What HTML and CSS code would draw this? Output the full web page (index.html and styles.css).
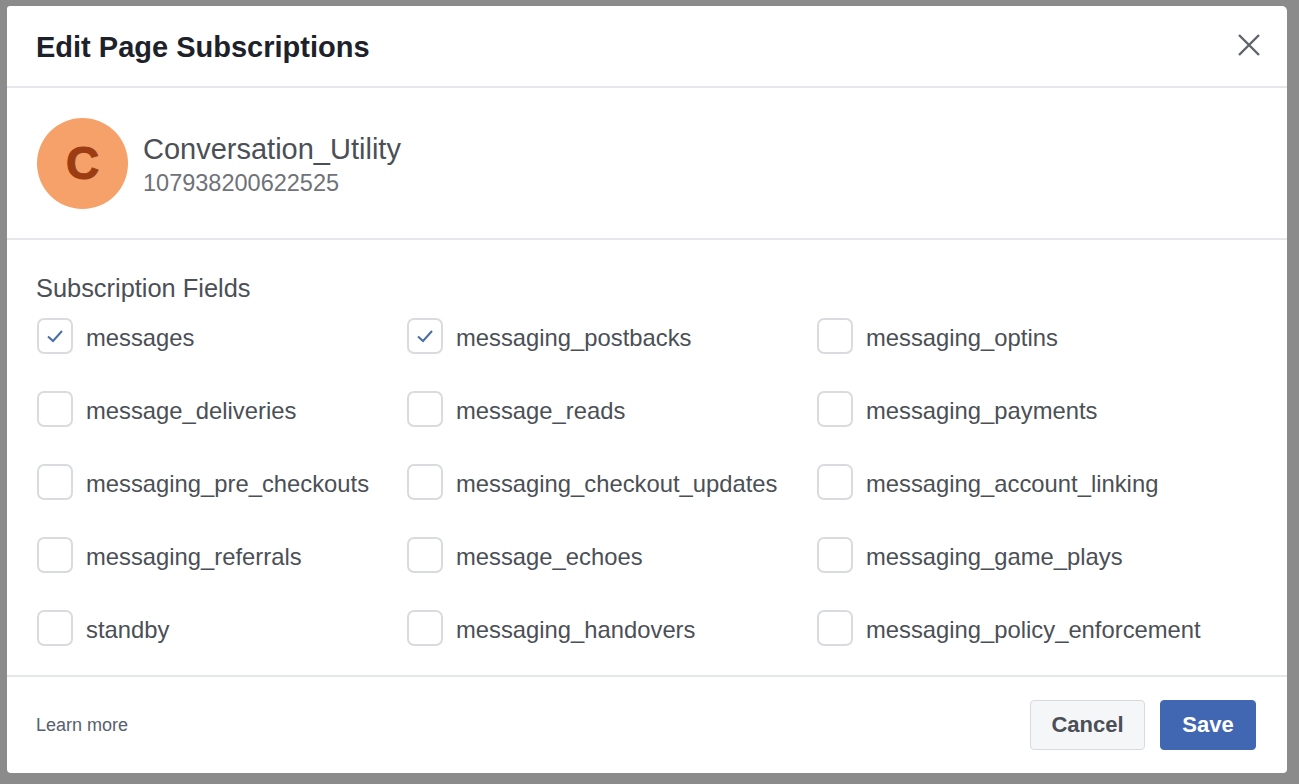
FILE: index.html
```html
<!DOCTYPE html>
<html lang="en">
<head>
<meta charset="utf-8">
<title>Edit Page Subscriptions</title>
<link rel="stylesheet" href="styles.css">
</head>
<body>
<div class="dialog">
  <div class="header">
    <div class="title">Edit Page Subscriptions</div>
    <button class="close" aria-label="Close">
      <svg width="24" height="24" viewBox="0 0 24 24"><path d="M2 2 L22 22 M22 2 L2 22" stroke="#5f636a" stroke-width="2.4" fill="none"/></svg>
    </button>
  </div>
  <div class="page">
    <div class="avatar">C</div>
    <div class="page-info">
      <div class="page-name">Conversation_Utility</div>
      <div class="page-id">107938200622525</div>
    </div>
  </div>
  <div class="fields">
    <div class="fields-title">Subscription Fields</div>
    <div class="grid">
      <label class="item"><span class="box checked"><svg width="20" height="16" viewBox="0 0 20 16"><path d="M3 8.5 L8 13 L17 3" stroke="#4a6ea9" stroke-width="2" fill="none"/></svg></span><span class="label">messages</span></label>
      <label class="item"><span class="box checked"><svg width="20" height="16" viewBox="0 0 20 16"><path d="M3 8.5 L8 13 L17 3" stroke="#4a6ea9" stroke-width="2" fill="none"/></svg></span><span class="label">messaging_postbacks</span></label>
      <label class="item"><span class="box"></span><span class="label">messaging_optins</span></label>
      <label class="item"><span class="box"></span><span class="label">message_deliveries</span></label>
      <label class="item"><span class="box"></span><span class="label">message_reads</span></label>
      <label class="item"><span class="box"></span><span class="label">messaging_payments</span></label>
      <label class="item"><span class="box"></span><span class="label">messaging_pre_checkouts</span></label>
      <label class="item"><span class="box"></span><span class="label">messaging_checkout_updates</span></label>
      <label class="item"><span class="box"></span><span class="label">messaging_account_linking</span></label>
      <label class="item"><span class="box"></span><span class="label">messaging_referrals</span></label>
      <label class="item"><span class="box"></span><span class="label">message_echoes</span></label>
      <label class="item"><span class="box"></span><span class="label">messaging_game_plays</span></label>
      <label class="item"><span class="box"></span><span class="label">standby</span></label>
      <label class="item"><span class="box"></span><span class="label">messaging_handovers</span></label>
      <label class="item"><span class="box"></span><span class="label">messaging_policy_enforcement</span></label>
    </div>
  </div>
  <div class="footer">
    <a class="learn" href="#">Learn more</a>
    <div class="buttons">
      <button class="btn cancel">Cancel</button>
      <button class="btn save">Save</button>
    </div>
  </div>
</div>
</body>
</html>
```
FILE: styles.css
```css
html, body {
  margin: 0;
  padding: 0;
}
body {
  background: #8b8b8b;
  font-family: "Liberation Sans", Arial, sans-serif;
  width: 1299px;
  height: 784px;
  overflow: hidden;
}
.dialog {
  margin: 6px 0 0 7px;
  width: 1280px;
  height: 767px;
  background: #fff;
  border-radius: 3px 5px 4px 4px;
  display: flex;
  flex-direction: column;
  box-sizing: border-box;
}
.header {
  height: 82px;
  box-sizing: border-box;
  border-bottom: 2px solid #e6e7ea;
  display: flex;
  align-items: center;
  justify-content: space-between;
  padding: 0 26px 0 29px;
}
.title {
  font-weight: bold;
  font-size: 29px;
  color: #1d2129;
  padding-top: 2px;
}
.close {
  background: none;
  border: 0;
  padding: 0;
  width: 24px;
  height: 24px;
  display: flex;
  cursor: pointer;
  margin-bottom: 3px;
}
.page {
  height: 152px;
  box-sizing: border-box;
  border-bottom: 2px solid #e6e7ea;
  display: flex;
  align-items: center;
  padding: 0 29px 0 30px;
}
.avatar {
  width: 91px;
  height: 91px;
  border-radius: 50%;
  background: #f5a169;
  color: #9b3c12;
  font-weight: bold;
  font-size: 46px;
  display: flex;
  align-items: center;
  justify-content: center;
  flex-shrink: 0;
  -webkit-text-stroke: 1px #9b3c12;
}
.page-info {
  margin-left: 15px;
  display: flex;
  flex-direction: column;
  padding-top: 4px;
}
.page-name {
  font-size: 29px;
  line-height: 34px;
  color: #4b4f56;
}
.page-id {
  font-size: 23.5px;
  line-height: 30px;
  margin-top: 2px;
  color: #6f7278;
}
.fields {
  box-sizing: border-box;
  height: 437px;
  border-bottom: 2px solid #e6e7ea;
  padding: 33px 29px 0 29px;
}
.fields-title {
  font-size: 25.4px;
  line-height: 30px;
  color: #4b4f56;
}
.grid {
  margin-top: 15px;
  display: grid;
  grid-template-columns: 370px 410px auto;
  row-gap: 37px;
}
.item {
  display: flex;
  align-items: center;
  height: 36px;
}
.box {
  width: 36px;
  height: 36px;
  box-sizing: border-box;
  border: 2px solid #d9dbdf;
  border-radius: 7px;
  margin-left: 1px;
  display: flex;
  align-items: center;
  justify-content: center;
  flex-shrink: 0;
}
.label {
  margin-left: 13px;
  padding-top: 3px;
  font-size: 23.8px;
  color: #4b4f56;
  white-space: nowrap;
}
.footer {
  flex: 1;
  display: flex;
  align-items: center;
  justify-content: space-between;
  padding: 0 31px 0 29px;
}
.learn {
  font-size: 18px;
  color: #56606f;
  text-decoration: none;
}
.buttons {
  display: flex;
  gap: 15px;
}
.btn {
  height: 50px;
  border-radius: 4px;
  font-family: "Liberation Sans", Arial, sans-serif;
  font-weight: bold;
  font-size: 22px;
  box-sizing: border-box;
  cursor: pointer;
}
.cancel {
  width: 115px;
  background: #f5f6f7;
  border: 1px solid #d8dadf;
  color: #4b4f56;
}
.save {
  width: 96px;
  background: #4267b2;
  border: 1px solid #4267b2;
  color: #fff;
}
```
